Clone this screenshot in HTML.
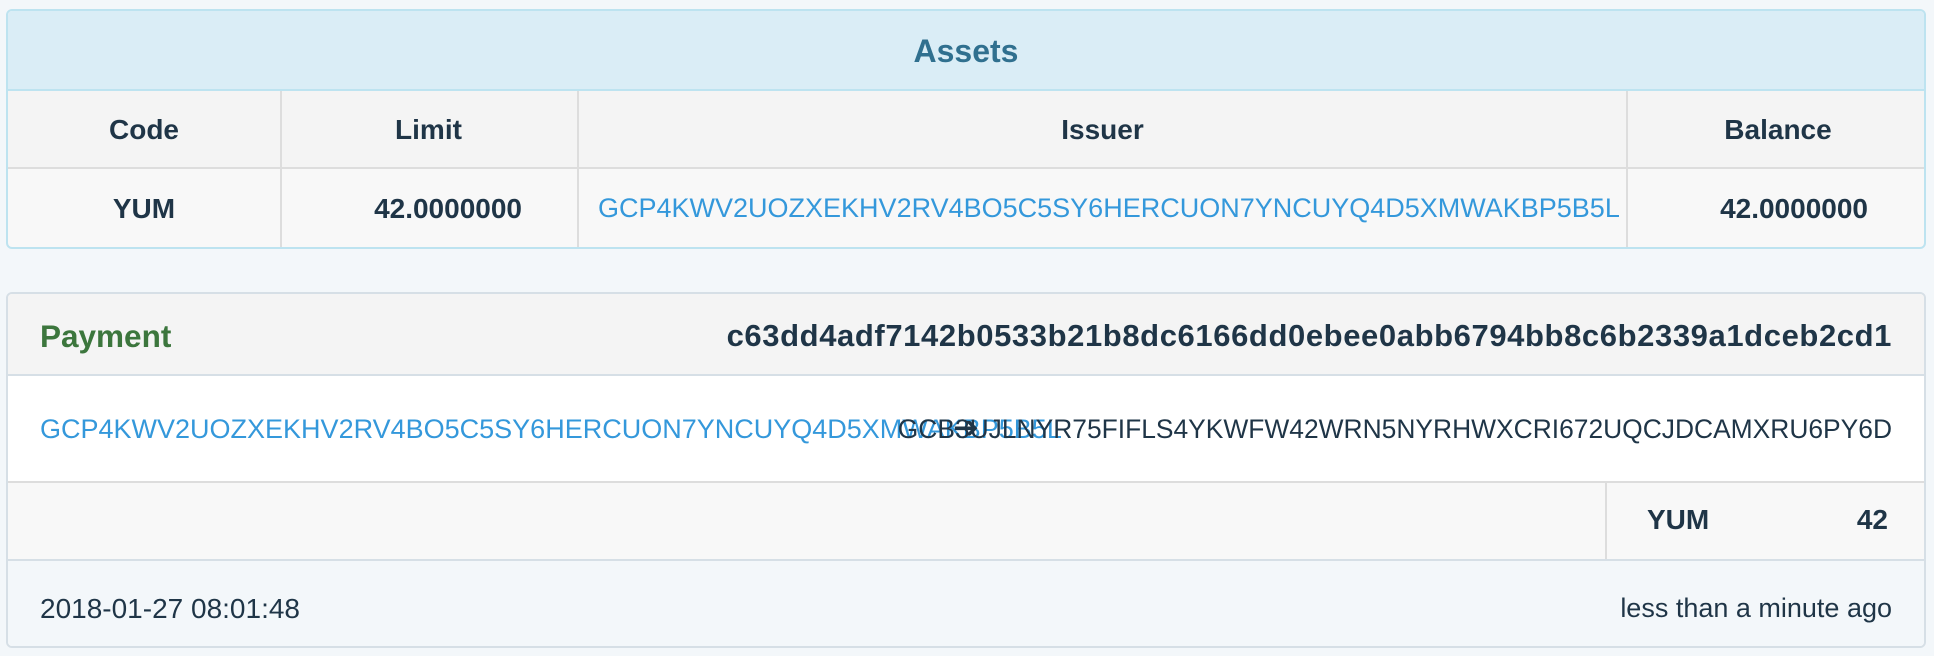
<!DOCTYPE html>
<html><head><meta charset="utf-8"><style>
*{margin:0;padding:0;box-sizing:border-box}
body{width:1934px;height:656px;background:#f3f7fa;font-family:"Liberation Sans",Arial,sans-serif;color:#1f3547;position:relative;overflow:hidden}
.a{position:absolute;white-space:nowrap}
.b{font-weight:bold}
.p{position:absolute;border:2px solid #bde3f0;border-radius:6px;overflow:hidden}
.q{position:absolute;border:2px solid #d6dfe6;border-radius:6px;overflow:hidden}
.ln{color:#3498db}
</style></head><body>
<div class="p" style="left:6px;top:9px;width:1920px;height:240px;background:#f8f8f8">
 <div class="a" style="left:0;top:0;width:100%;height:80px;background:#daedf6;border-bottom:2px solid #bde3f0"></div>
 <div class="a b" style="left:0;top:22px;width:100%;text-align:center;font-size:32px;color:#30708f">Assets</div>
 <div class="a" style="left:0;top:80px;width:100%;height:78px;background:#f4f4f4;border-bottom:2px solid #ddd"></div>
 <div class="a" style="left:272px;top:80px;width:2px;height:160px;background:#ddd"></div>
 <div class="a" style="left:569px;top:80px;width:2px;height:160px;background:#ddd"></div>
 <div class="a" style="left:1618px;top:80px;width:2px;height:160px;background:#ddd"></div>
 <div class="a b" style="left:0;top:103px;width:272px;text-align:center;font-size:28px">Code</div>
 <div class="a b" style="left:272px;top:103px;width:297px;text-align:center;font-size:28px">Limit</div>
 <div class="a b" style="left:571px;top:103px;width:1047px;text-align:center;font-size:28px">Issuer</div>
 <div class="a b" style="left:1620px;top:103px;width:300px;text-align:center;font-size:28px">Balance</div>
 <div class="a b" style="left:0;top:182px;width:272px;text-align:center;font-size:28px">YUM</div>
 <div class="a b" style="left:272px;top:182px;width:242px;text-align:right;font-size:28px">42.0000000</div>
 <div class="a ln" style="left:590px;top:182px;font-size:27px">GCP4KWV2UOZXEKHV2RV4BO5C5SY6HERCUON7YNCUYQ4D5XMWAKBP5B5L</div>
 <div class="a b" style="left:1620px;top:182px;width:240px;text-align:right;font-size:28px">42.0000000</div>
</div>
<div class="q" style="left:6px;top:292px;width:1920px;height:356px;background:#fff">
 <div class="a" style="left:0;top:0;width:100%;height:82px;background:#f4f4f4;border-bottom:2px solid #d6dfe6"></div>
 <div class="a b" style="left:32px;top:24px;font-size:31.5px;color:#3c763d">Payment</div>
 <div class="a b" style="right:32px;top:24px;font-size:31px;letter-spacing:0.6px">c63dd4adf7142b0533b21b8dc6166dd0ebee0abb6794bb8c6b2339a1dceb2cd1</div>
 <div class="a ln" style="left:32px;top:120px;font-size:27px">GCP4KWV2UOZXEKHV2RV4BO5C5SY6HERCUON7YNCUYQ4D5XMWAKBP5B5L</div>
 <div class="a" style="right:32px;top:120px;font-size:26.4px">GCB3UJLNYR75FIFLS4YKWFW42WRN5NYRHWXCRI672UQCJDCAMXRU6PY6D</div>
 <div class="a" style="left:945px;top:116px;font-size:31px;color:#1f3547">&#10132;</div>
 <div class="a" style="left:0;top:187px;width:100%;height:80px;background:#f8f8f8;border-top:2px solid #ddd;border-bottom:2px solid #d6dfe6"></div>
 <div class="a" style="left:1597px;top:189px;width:2px;height:76px;background:#ddd"></div>
 <div class="a b" style="left:1639px;top:210px;font-size:28px">YUM</div>
 <div class="a b" style="right:36px;top:210px;font-size:28px">42</div>
 <div class="a" style="left:0;top:267px;width:100%;height:90px;background:#f3f7fa"></div>
 <div class="a" style="left:32px;top:299px;font-size:28px">2018-01-27 08:01:48</div>
 <div class="a" style="right:32px;top:299px;font-size:27px">less than a minute ago</div>
</div>
</body></html>
